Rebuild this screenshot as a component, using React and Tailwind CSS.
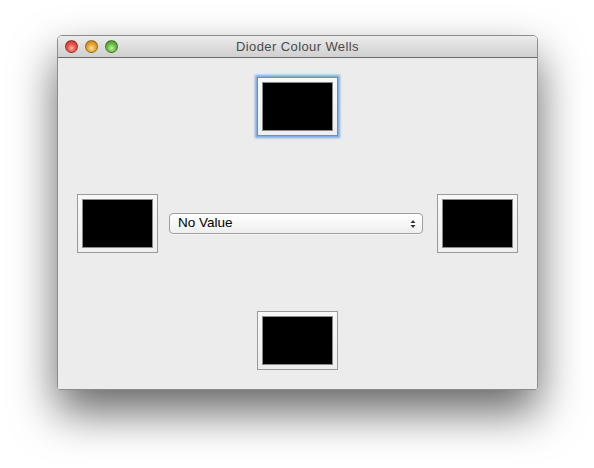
export default function App() {
  const Light = ({ cls }) => (
    <div className={`h-[13px] w-[13px] rounded-full border border-black/30 ${cls}`} />
  );
  const Well = ({ focused }) => (
    <div
      className={`h-[59px] w-[81px] p-[4px] bg-gradient-to-b from-[#f8f8f8] to-[#eeeeee] border ${
        focused
          ? "border-[#5b93d3] shadow-[0_0_2px_2px_rgba(100,155,220,0.8)]"
          : "border-[#9a9a9a]"
      }`}
    >
      <div className="h-full w-full bg-black border border-[#8a8a8a]" />
    </div>
  );
  return (
    <div className="min-h-[468px] w-[594px] bg-white pl-[57px] pt-[35px]" style={{ fontFamily: '"Liberation Sans", Arial, sans-serif' }}>
      <div className="flex h-[355px] w-[481px] flex-col overflow-hidden rounded-t-[5px] rounded-b-[3px] border border-[#8c8c8c] shadow-[0_22px_45px_rgba(0,0,0,0.6)]">
        <div className="relative flex h-[22px] shrink-0 items-center border-b border-[#6a6a6a] bg-gradient-to-b from-[#ececec] to-[#d0d0d0] px-[7px]">
          <div className="flex gap-[7px]">
            <Light cls="bg-[radial-gradient(circle_at_50%_65%,#ffb0a8_0%,#e8554c_45%,#b82a22_100%)]" />
            <Light cls="bg-[radial-gradient(circle_at_50%_65%,#ffe3a0_0%,#e6a534_45%,#b87a12_100%)]" />
            <Light cls="bg-[radial-gradient(circle_at_50%_65%,#c8f0a8_0%,#6cbd45_45%,#3f8a22_100%)]" />
          </div>
          <div className="absolute inset-0 flex items-center justify-center text-[13px] tracking-[0.4px] text-[#4a4a4a]">
            Dioder Colour Wells
          </div>
        </div>
        <div className="flex flex-1 flex-col justify-between bg-[#ececec] p-[19px]">
          <div className="flex justify-center">
            <Well focused />
          </div>
          <div className="flex items-center">
            <Well />
            <div className="ml-[11px] mr-[14px] flex h-[21px] flex-1 items-center justify-between rounded-[4px] border border-[#9f9f9f] bg-gradient-to-b from-white to-[#efefef] pl-[8px] pr-[6px] text-[13.5px] text-black shadow-[0_1px_0_rgba(255,255,255,0.6)]">
              <span>No Value</span>
              <svg width="6" height="10" viewBox="0 0 6 10">
                <path d="M3 1 L5.5 4 L0.5 4 Z" fill="#333" />
                <path d="M3 9 L5.5 6 L0.5 6 Z" fill="#333" />
              </svg>
            </div>
            <Well />
          </div>
          <div className="flex justify-center">
            <Well />
          </div>
        </div>
      </div>
    </div>
  );
}
